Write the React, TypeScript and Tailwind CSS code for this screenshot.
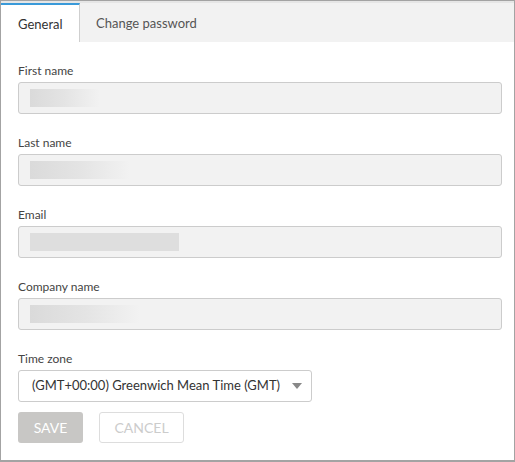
import React from "react";

const font = { fontFamily: "Lato, 'Noto Sans', sans-serif" };

function Blur({ w, solid }: { w: number; solid?: boolean }) {
  return (
    <div
      className={
        solid
          ? "h-[18px] bg-[#dedede]"
          : "h-[18px] bg-gradient-to-r from-[#dadada] via-[#e4e4e4] to-[#f2f2f2]"
      }
      style={{ width: w }}
    />
  );
}

function Field({ label, w, solid }: { label: string; w: number; solid?: boolean }) {
  return (
    <div className="flex flex-col">
      <label className="text-[12px] leading-[16px] text-[#444]">{label}</label>
      <div className="mt-[3px] h-[32px] rounded-[3px] border border-[#cccccc] bg-[#f2f2f2] flex items-center pl-[11px]">
        <Blur w={w} solid={solid} />
      </div>
    </div>
  );
}

export default function App() {
  return (
    <div
      className="w-[515px] h-[462px] border border-b-2 border-[#a3a3a3] bg-white overflow-hidden flex flex-col"
      style={font}
    >
      <div className="h-[41px] bg-[#f2f2f2] border-t-2 border-[#e6e6e6] flex shrink-0">
        <div className="w-[79px] bg-white border-t-2 border-t-[#3a9ad9] border-r border-r-[#cfcfcf] flex items-center pl-[17px] pt-[2px] text-[13px] text-[#333]">
          General
        </div>
        <div className="flex items-center pl-[16px] pt-[2px] text-[13px] text-[#555]">Change password</div>
      </div>
      <div className="pl-[17px] pr-[12px] pt-[21px] flex flex-col gap-[21px]">
        <Field label="First name" w={70} />
        <Field label="Last name" w={100} />
        <Field label="Email" w={149} solid />
        <Field label="Company name" w={110} />
        <div className="flex flex-col">
          <label className="text-[12px] leading-[16px] text-[#444]">Time zone</label>
          <div className="mt-[3px] w-[294px] h-[32px] rounded-[3px] border border-[#cccccc] bg-white flex items-center pl-[13px] pr-[9px] justify-between">
            <span className="text-[13px] whitespace-nowrap text-[#333]">(GMT+00:00) Greenwich Mean Time (GMT)</span>
            <svg width="10" height="6" viewBox="0 0 10 6" className="shrink-0">
              <path d="M0 0 L10 0 L5 6 Z" fill="#888" />
            </svg>
          </div>
          <div className="mt-[10px] flex gap-[16px]">
            <button className="w-[65px] h-[31px] rounded-[3px] bg-[#c8c7c5] text-white text-[14px]">SAVE</button>
            <button className="w-[85px] h-[31px] rounded-[3px] border border-[#dddddd] bg-white text-[#cccccc] text-[14px]">
              CANCEL
            </button>
          </div>
        </div>
      </div>
    </div>
  );
}
